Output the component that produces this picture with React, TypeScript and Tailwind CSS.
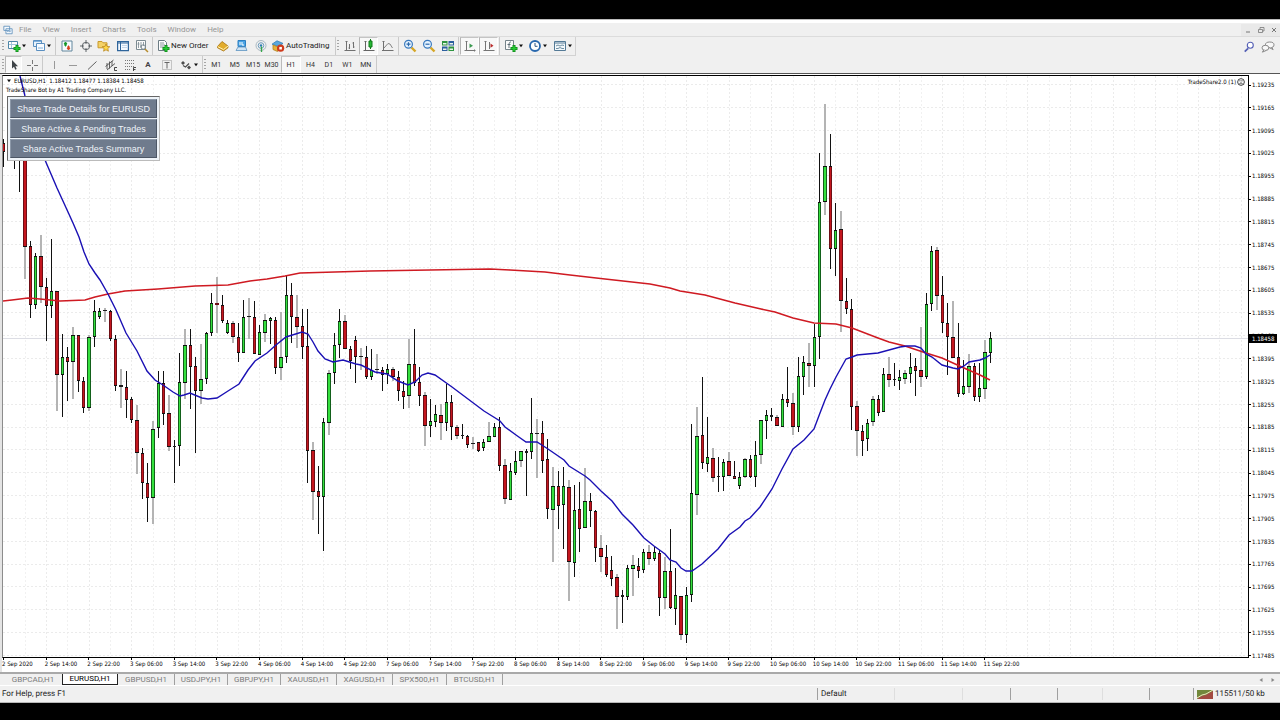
import React from "react";

type Candle = [string, number, number, number, number];

// kind (g = up, r = down, d = doji), high, low, body top, body bottom
const CANDLES: Candle[] = [
  ["r", 139, 167, 143, 152], ["d", 120, 158, 130, 131], ["d", 120, 169, 130, 131], ["d", 120, 192, 130, 131],
  ["r", 120, 279, 140, 247], ["r", 241, 318, 246, 305], ["g", 253, 309, 256, 305], ["r", 235, 303, 256, 287],
  ["r", 278, 341, 287, 306], ["g", 239, 318, 291, 306], ["r", 291, 411, 291, 375], ["g", 334, 417, 357, 375],
  ["r", 347, 401, 357, 362], ["g", 327, 399, 335, 362], ["r", 335, 392, 335, 381], ["r", 377, 413, 381, 408],
  ["g", 335, 411, 337, 408], ["g", 300, 347, 311, 337], ["g", 308, 319, 311, 317], ["d", 308, 322, 310, 311],
  ["r", 310, 341, 311, 339], ["r", 335, 391, 339, 386], ["d", 369, 408, 385, 387], ["r", 371, 418, 387, 400],
  ["r", 397, 423, 399, 420], ["r", 405, 474, 420, 453], ["r", 448, 499, 453, 483], ["r", 463, 522, 483, 498],
  ["g", 421, 524, 429, 498], ["g", 371, 438, 383, 428], ["r", 371, 425, 383, 414], ["r", 395, 451, 413, 447],
  ["d", 440, 483, 446, 447], ["g", 353, 466, 382, 446], ["g", 329, 399, 345, 383], ["r", 329, 409, 345, 367],
  ["r", 357, 453, 366, 391], ["g", 344, 404, 379, 391], ["g", 332, 384, 333, 379], ["g", 293, 336, 303, 333],
  ["r", 277, 333, 303, 305], ["r", 295, 323, 305, 321], ["g", 320, 334, 323, 333], ["r", 321, 343, 323, 337],
  ["r", 323, 362, 337, 353], ["g", 300, 353, 317, 353], ["d", 298, 339, 316, 317], ["r", 301, 354, 317, 354],
  ["g", 325, 355, 332, 355], ["g", 314, 342, 320, 333], ["g", 317, 344, 318, 321], ["r", 317, 374, 320, 368],
  ["g", 312, 380, 357, 368], ["g", 276, 363, 295, 357], ["r", 283, 343, 295, 317], ["r", 295, 348, 317, 327],
  ["r", 309, 359, 326, 347], ["r", 309, 483, 346, 451], ["r", 442, 520, 450, 492], ["r", 466, 534, 491, 497],
  ["g", 418, 551, 422, 497], ["g", 370, 435, 373, 423], ["g", 333, 384, 345, 373], ["g", 309, 358, 321, 345],
  ["r", 315, 349, 321, 349], ["r", 346, 369, 349, 361], ["r", 336, 383, 340, 357], ["d", 348, 370, 356, 357],
  ["r", 346, 379, 357, 377], ["g", 349, 380, 370, 377], ["d", 354, 374, 369, 370], ["r", 367, 391, 370, 375],
  ["g", 364, 384, 369, 374], ["r", 367, 381, 369, 377], ["r", 371, 401, 377, 391], ["r", 381, 409, 391, 397],
  ["g", 339, 408, 364, 396], ["r", 329, 386, 364, 383], ["r", 367, 406, 382, 396], ["r", 392, 446, 395, 426],
  ["g", 399, 437, 421, 426], ["g", 405, 427, 414, 422], ["r", 404, 440, 415, 423], ["g", 384, 431, 402, 423],
  ["r", 395, 440, 402, 427], ["r", 425, 439, 427, 436], ["d", 424, 439, 435, 436], ["r", 435, 448, 436, 445],
  ["d", 437, 449, 443, 444], ["r", 442, 452, 442, 451], ["g", 439, 451, 442, 448], ["g", 422, 442, 436, 442],
  ["g", 423, 437, 427, 437], ["r", 417, 471, 427, 466], ["r", 459, 504, 465, 499], ["g", 463, 500, 471, 500],
  ["g", 451, 475, 461, 473], ["g", 451, 467, 451, 461], ["d", 449, 496, 451, 453], ["g", 398, 459, 433, 452],
  ["d", 419, 478, 433, 434], ["r", 421, 473, 433, 461], ["r", 439, 519, 459, 509], ["g", 467, 562, 486, 510],
  ["r", 471, 529, 486, 506], ["g", 467, 549, 486, 505], ["r", 480, 601, 487, 562], ["g", 485, 577, 510, 563],
  ["r", 482, 552, 509, 529], ["g", 468, 528, 501, 528], ["r", 493, 527, 501, 511], ["r", 510, 562, 511, 548],
  ["r", 535, 572, 548, 557], ["r", 545, 577, 557, 575], ["r", 556, 586, 570, 579], ["r", 574, 629, 577, 597],
  ["d", 590, 623, 595, 597], ["g", 565, 600, 568, 597], ["g", 555, 596, 565, 569], ["r", 558, 578, 566, 571],
  ["g", 549, 573, 552, 570], ["r", 545, 565, 552, 559], ["g", 546, 561, 552, 559], ["r", 550, 616, 553, 598],
  ["g", 557, 609, 571, 598], ["r", 529, 609, 571, 608], ["g", 568, 625, 595, 609], ["r", 596, 640, 596, 635],
  ["g", 587, 643, 595, 635], ["g", 424, 602, 493, 595], ["g", 407, 515, 436, 495], ["r", 377, 469, 435, 463],
  ["g", 417, 472, 457, 464], ["r", 448, 482, 458, 478], ["d", 457, 492, 476, 477], ["g", 459, 491, 462, 477],
  ["r", 452, 476, 461, 476], ["r", 461, 479, 476, 479], ["g", 472, 489, 477, 486], ["g", 458, 478, 459, 477],
  ["r", 455, 478, 459, 477], ["g", 441, 487, 455, 477], ["g", 420, 464, 420, 455], ["g", 410, 439, 415, 421],
  ["d", 408, 421, 415, 417], ["r", 415, 426, 417, 426], ["g", 394, 427, 399, 427], ["r", 367, 407, 399, 403],
  ["r", 393, 435, 403, 427], ["g", 357, 432, 376, 427], ["g", 356, 395, 362, 377], ["r", 343, 387, 363, 366],
  ["g", 324, 387, 337, 366], ["g", 153, 359, 202, 337], ["g", 104, 215, 166, 202], ["r", 134, 269, 166, 249],
  ["g", 203, 276, 230, 249], ["r", 211, 332, 229, 301], ["r", 278, 314, 301, 309], ["r", 299, 430, 309, 407],
  ["r", 401, 456, 406, 431], ["r", 425, 456, 431, 441], ["g", 419, 451, 423, 439], ["g", 396, 426, 399, 422],
  ["r", 395, 416, 399, 413], ["g", 368, 412, 374, 412], ["r", 357, 387, 374, 380], ["d", 363, 386, 379, 380],
  ["g", 370, 390, 377, 381], ["g", 370, 384, 373, 379], ["g", 353, 383, 367, 374], ["r", 358, 396, 366, 371],
  ["r", 327, 387, 370, 377], ["g", 293, 379, 304, 377], ["g", 246, 311, 251, 304], ["r", 247, 310, 250, 296],
  ["r", 276, 333, 295, 323], ["r", 303, 375, 323, 337], ["r", 301, 358, 337, 358], ["r", 323, 397, 357, 394],
  ["g", 360, 395, 386, 394], ["g", 354, 393, 366, 387], ["r", 363, 401, 366, 397], ["g", 363, 402, 388, 397],
  ["g", 340, 399, 352, 389], ["g", 332, 363, 338, 353],
];

const FAST_MA =
  "20,76 25,96 34,126 45,160 57,188 68,212 73,223 79,237 84,252 89,264 95,273 100,280 108,294 116,310 126,333 137,351 147,371 155,380 163,385 173,392 180,396 184,395 190,393 202,398 208,399 217,398 228,391 239,384 248,370 255,361 267,353 276,345 286,337 302,332 308,334 313,342 318,351 325,359 333,362 343,360 356,364 361,365 375,372 387,374 398,381 408,385 415,382 422,375 428,373 435,375 452,387 484,411 500,421 505,427 516,435 526,442 537,442 548,449 564,460 569,466 585,476 590,480 601,491 612,501 622,514 633,525 644,538 654,546 665,554 670,560 676,562 681,568 686,571 692,571 702,564 718,549 729,535 740,527 745,521 750,518 760,507 772,489 782,469 793,449 804,440 814,429 820,413 825,400 830,389 836,377 841,368 846,359 852,357 857,355 878,353 900,347 907,346 915,346 921,348 926,354 932,357 942,365 953,368 958,369 964,366 969,362 980,360 985,358 990,355";
const SLOW_MA =
  "3,301 12,300 28,298 40,299 50,300 60,301 85,300 95,297 108,294 125,291 158,289 195,286 228,285 250,281 267,279 285,276 300,273 335,272 370,271 430,270 490,269 510,270 545,272 570,275 605,279 650,284 670,288 680,291 705,295 735,303 761,309 775,312 793,318 814,323 836,324 852,328 878,338 889,342 905,346 926,353 942,358 964,368 980,375 990,380";

const DATES = [
  "2 Sep 2020", "2 Sep 14:00", "2 Sep 22:00", "3 Sep 06:00", "3 Sep 14:00", "3 Sep 22:00", "4 Sep 06:00", "4 Sep 14:00",
  "4 Sep 22:00", "7 Sep 06:00", "7 Sep 14:00", "7 Sep 22:00", "8 Sep 06:00", "8 Sep 14:00", "8 Sep 22:00", "9 Sep 06:00",
  "9 Sep 14:00", "9 Sep 22:00", "10 Sep 06:00", "10 Sep 14:00", "10 Sep 22:00", "11 Sep 06:00", "11 Sep 14:00", "11 Sep 22:00",
];

const PRICES = Array.from({ length: 26 }, (_, i) => (1.19235 - i * 0.0007).toFixed(5));

function Plot() {
  const columns = Array.from({ length: 58 }, (_, k) => Math.floor(25 + (k * 64) / 3) + 0.5);
  const rows = Array.from({ length: 26 }, (_, k) => Math.floor(84.5 + k * 22.84) + 0.5);
  return (
    <svg viewBox="3 76 1245 581" className="block h-auto w-full" role="img" aria-label="EURUSD hourly candles">
      <g strokeWidth="1" strokeDasharray="2 2" shapeRendering="crispEdges">
        {columns.map((x, k) => (
          <line key={k} x1={x} x2={x} y1="76" y2="657" stroke={k % 2 ? "#ebebeb" : "#f1f1f1"} />
        ))}
        {rows.map((y, k) => (
          <line key={k} x1="3" x2="1248" y1={y} y2={y} stroke="#ebebeb" />
        ))}
      </g>
      <line x1="3" x2="1248" y1="338.5" y2="338.5" stroke="#dcdde4" shapeRendering="crispEdges" />
      <g shapeRendering="crispEdges">
        {CANDLES.map(([kind, high, low, top, bottom], i) => {
          const wide = i % 3 === 1;
          const x = Math.floor((11 + i * 16) / 3 + 0.01);
          const left = wide ? x - 2 : x - 1;
          const width = wide ? 4 : 3;
          const height = bottom - top;
          return (
            <g key={i}>
              <rect x={wide ? x - 1 : x} y={high} width={wide ? 2 : 1} height={low - high} fill={wide ? "#b4b4b4" : "#111"} />
              <rect x={left} y={top} width={width} height={Math.max(1, height)} fill={kind === "r" ? "#6e0e15" : kind === "g" ? "#12601a" : "#1c1c1c"} />
              {kind !== "d" && height > 2 && (
                <rect x={left + 1} y={top + 1} width={width - 2} height={height - 2} fill={kind === "r" ? "#c4161e" : "#35e03e"} />
              )}
              {kind !== "d" && height > 2 && (
                <g fill="#111">
                  <rect x={left} y={top} width={width} height="1" />
                  <rect x={left} y={bottom - 1} width={width} height="1" />
                </g>
              )}
            </g>
          );
        })}
      </g>
      <polyline points={SLOW_MA} fill="none" stroke="#cf1a22" strokeWidth="1.6" />
      <polyline points={FAST_MA} fill="none" stroke="#1a10b4" strokeWidth="1.4" />
    </svg>
  );
}

const Icon = ({ children }: { children: React.ReactNode }) => (
  <svg viewBox="0 0 14 14" className="h-3.5 w-3.5 shrink-0" fill="none" aria-hidden="true">
    {children}
  </svg>
);

const Plus = () => <path d="M6.500 9.500h7M10 6v7" stroke="#0f8a1a" strokeWidth="3" />;
const PlusLight = () => <path d="M7.200 9.500h5.600M10 6.700v5.600" stroke="#27c934" strokeWidth="1.6" />;

const icons = {
  newChart: (
    <Icon>
      <path d="M1.5 2.5h9v7h-9z" fill="#fff" stroke="#4f86a8" />
      <path d="M2 5.5h8M4.5 3v6" stroke="#9fc4d8" />
      <Plus /><PlusLight />
    </Icon>
  ),
  profiles: (
    <Icon>
      <path d="M1.5 1.5h8v6h-8z" fill="#e9f3fb" stroke="#5a8fc0" />
      <path d="M4.5 4.5h8v7h-8z" fill="#f7fbff" stroke="#5a8fc0" />
      <path d="M2 2.5h7M6 9h5" stroke="#7fb0dc" />
    </Icon>
  ),
  market: (
    <Icon>
      <path d="M2 2h10v10H2z" fill="#f6fbff" stroke="#63869c" />
      <path d="M4 5l1.5-2L7 5zM5 5h1v2H5z" fill="#17972a" stroke="#17972a" />
      <path d="M7 9l1.5 2L10 9zM8 7h1v2H8z" fill="#d9401c" stroke="#d9401c" />
    </Icon>
  ),
  target: (
    <Icon>
      <circle cx="7" cy="7" r="3.7" stroke="#5e6468" />
      <path d="M7 1v4M7 9v4M1 7h4M9 7h4" stroke="#5e6468" />
    </Icon>
  ),
  navigator: (
    <Icon>
      <path d="M1 2.5h4l1 1.3h4v5H1z" fill="#f4d267" stroke="#c8992c" />
      <path d="M9 5l1.1 2.5 2.7.2-2 1.8.6 2.7L9 10.8l-2.4 1.4.6-2.7-2-1.8 2.7-.2z" fill="#ffd948" stroke="#b98720" strokeWidth=".8" />
    </Icon>
  ),
  terminal: (
    <Icon>
      <path d="M1.6 2.6h10.8v9H1.6z" fill="#f4f9ff" stroke="#2f659b" strokeWidth="1.2" />
      <path d="M4.5 3v8M2 4h10" stroke="#2f659b" />
      <path d="M6 6.5h5M6 8.5h5" stroke="#b7cde2" strokeWidth=".8" />
    </Icon>
  ),
  tester: (
    <Icon>
      <path d="M1.5 1.5h9v9h-9z" fill="#fafafa" stroke="#7c8b92" />
      <path d="M3.5 3v6M6 3v6M8.5 3v4M2.5 5h2M5 7h2" stroke="#788890" strokeWidth=".8" />
      <circle cx="8.2" cy="8" r="2.2" stroke="#7c8b92" />
      <path d="M10 10l3 3" stroke="#b68b2c" strokeWidth="1.5" />
    </Icon>
  ),
  order: (
    <Icon>
      <path d="M2.5 1.5h6l2 2v8h-8z" fill="#fdfdfd" stroke="#6c7c84" />
      <path d="M4 4h4M4 6h5M4 8h4" stroke="#6c7c84" strokeWidth=".8" />
      <Plus /><PlusLight />
    </Icon>
  ),
  editor: (
    <Icon>
      <path d="M1.5 7.5L6 2.5l6 4.5v1.8L7.5 12l-6-3.2z" fill="#e2ac2c" stroke="#a87412" strokeWidth=".8" />
      <path d="M1.8 7.6L7.5 10.6 12 7" stroke="#fff2b5" />
    </Icon>
  ),
  community: (
    <Icon>
      <path d="M3 1.5h7.5v6H3z" fill="#4aa3e4" stroke="#2b7ec0" />
      <path d="M5 3v3M7 3v3h2" stroke="#fff" />
      <path d="M3 8l-2 3.5h11L10.5 8z" fill="#cfe3f3" stroke="#5c93c0" strokeWidth=".8" />
    </Icon>
  ),
  signals: (
    <Icon>
      <circle cx="7" cy="6.5" r="5" stroke="#a9b8c2" />
      <circle cx="7" cy="6.5" r="2.8" stroke="#6d9bbd" />
      <circle cx="7" cy="6.5" r="1.2" fill="#2d7bb5" />
      <path d="M7.5 7.5V13" stroke="#35a648" strokeWidth="1.3" />
    </Icon>
  ),
  auto: (
    <Icon>
      <path d="M1 5.2L6 1.8l6 2.6-4.5 3z" fill="#58a8de" stroke="#357fb4" strokeWidth=".8" />
      <path d="M2 6v4.5l4.5 2V7.8z" fill="#e6b23c" stroke="#b3831d" strokeWidth=".8" />
      <circle cx="9.6" cy="9.2" r="3.6" fill="#cf3a1b" />
      <path d="M8.3 7.9h2.6v2.6H8.3z" fill="#fff" />
    </Icon>
  ),
  bars: (
    <Icon>
      <path d="M3.5 2v9.500h9M2.500 3l1-1 1 1M1.500 11.5H4" stroke="#707070" />
      <path d="M6.5 5v5M5.500 9h1M10.5 3v6M9.500 4h1M10.5 8H11.500" stroke="#707070" />
    </Icon>
  ),
  candles: (
    <Icon>
      <path d="M3.5 2v9.500h9M2.500 3l1-1 1 1M1.5 11.5H4" stroke="#646464" />
      <path d="M8.5 0v10" stroke="#117a1b" />
      <path d="M7 2h3v6H7z" fill="#26b834" stroke="#117a1b" />
    </Icon>
  ),
  line: (
    <Icon>
      <path d="M2.5 2v9.5h10M1.5 3l1-1 1 1M1 11.5h2" stroke="#707070" />
      <path d="M3 9l4-4.5 2 .5 2.5 4" stroke="#858585" />
    </Icon>
  ),
  zoomIn: (
    <Icon>
      <path d="M8.5 8.5l4 4" stroke="#d6a626" strokeWidth="2.4" />
      <circle cx="5.5" cy="5.2" r="3.9" fill="#e5f3ff" stroke="#3979bd" strokeWidth="1.2" />
      <path d="M3.5 5.2h4M5.5 3.2v4" stroke="#2c69ac" strokeWidth="1.2" />
    </Icon>
  ),
  zoomOut: (
    <Icon>
      <path d="M8.5 8.5l4 4" stroke="#d6a626" strokeWidth="2.4" />
      <circle cx="5.5" cy="5.2" r="3.9" fill="#e5f3ff" stroke="#3979bd" strokeWidth="1.2" />
      <path d="M3.5 5.2h4" stroke="#2c69ac" strokeWidth="1.2" />
    </Icon>
  ),
  tile: (
    <Icon>
      <path d="M1 2h5.5v4.5H1zM7.5 7.5H13V12H7.5z" fill="#2f9440" />
      <path d="M7.5 2H13v4.5H7.5zM1 7.5h5.5V12H1z" fill="#2c5f9e" />
      <path d="M2 4h3.5v1.5H2zM8.5 4H12v1.5H8.5zM2 9.5h3.5V11H2zM8.5 9.5H12V11H8.5z" fill="#e9f5ea" />
    </Icon>
  ),
  scroll: (
    <Icon>
      <path d="M3.5 2v9.500h9M2.500 3l1-1 1 1M1.500 11.5H4M11.500 10.500v2" stroke="#757575" />
      <path d="M6.5 4.500l3.500 2.200-3.500 2.200z" fill="#3b9a50" />
    </Icon>
  ),
  shift: (
    <Icon>
      <path d="M3.5 2v9.500h9M2.500 3l1-1 1 1M1.500 11.5H4M7.5 3v7" stroke="#757575" />
      <path d="M11.500 6.700L8.500 4.600v4.200z" fill="#b92a2a" />
    </Icon>
  ),
  indicators: (
    <Icon>
      <path d="M1.5 1.5h8v9h-8z" fill="#fbfbfb" stroke="#75838a" />
      <path d="M7 3c-2 0-2 1-2 6M3.5 5.5h3" stroke="#5e6f78" />
      <Plus /><PlusLight />
    </Icon>
  ),
  clock: (
    <Icon>
      <circle cx="7" cy="7" r="5" fill="#fff" stroke="#2867ad" strokeWidth="1.8" />
      <path d="M7 4v3.3h2.5" stroke="#2f5580" />
    </Icon>
  ),
  templates: (
    <Icon>
      <path d="M1.5 2.5h11v9h-11z" fill="#f3f8fb" stroke="#547a96" />
      <path d="M2 4h10" stroke="#547a96" />
      <path d="M3 7l2-1 2 1 2-1 2 .5M3 9.5h2l2-1 2 1h2" stroke="#5f8299" strokeWidth=".9" />
    </Icon>
  ),
  cursor: <Icon><path d="M5 2v8.5l2-1.8 1.3 3 1.4-.7-1.3-2.8H11z" fill="#3e4347" /></Icon>,
  cross: <Icon><path d="M7.500 2v4M7.500 9v4M2 7.500h4M9 7.500h4" stroke="#777" /></Icon>,
  vline: <Icon><path d="M7.5 3v8" stroke="#999" /></Icon>,
  hline: <Icon><path d="M3 7.5h8" stroke="#999" /></Icon>,
  trend: <Icon><path d="M3 11.5l8.5-8" stroke="#606060" /></Icon>,
  channel: (
    <Icon>
      <path d="M1.5 8.5l8-6.5M3 12l8-6.5M3 5v6M5.5 3.5v7M8 3v5" stroke="#4e4e4e" strokeWidth=".9" />
      <path d="M13 9.5h-2.5v3H13" stroke="#333" strokeWidth=".9" />
    </Icon>
  ),
  fibo: (
    <Icon>
      <path d="M2 2.5h10M2 5.500h10M2 8.500h10M2 11.500h6" stroke="#777" strokeDasharray="1 1" />
      <path d="M10.500 13V9.500H13M10.500 11.500h2" stroke="#333" strokeWidth=".9" />
    </Icon>
  ),
  label: (
    <Icon>
      <path d="M2.500 2.500h9v9h-9z" stroke="#999" strokeDasharray="1 1" />
      <path d="M4.500 4.500h5M7 5v5.500" stroke="#666" />
    </Icon>
  ),
  arrows: (
    <Icon>
      <path d="M4 3l2 2-2 2-2-2zM10 7.500l2 2-2 2-2-2z" fill="#4c4c4c" />
      <path d="M4 7.500L6.500 9 10 5.500" stroke="#4c4c4c" strokeWidth="1.200" />
    </Icon>
  ),
};

function Tool({ icon, label, pressed, menu, className = "w-[19px]" }: { icon: keyof typeof icons; label: string; pressed?: boolean; menu?: boolean; className?: string }) {
  return (
    <button
      type="button"
      aria-label={label}
      className={`flex h-full shrink-0 items-center justify-center ${className} ${pressed ? "border border-r-[#fff] border-b-[#fff] border-l-[#b5b5b5] border-t-[#c4c4c4] bg-[#f8f8f8]" : ""}`}
    >
      {icons[icon]}
      {menu && <Caret />}
    </button>
  );
}

const Caret = () => (
  <svg viewBox="0 0 6 4" className="h-1 w-1.5 shrink-0" aria-hidden="true"><path d="M1 .5h4L3 3.200z" fill="#111" /></svg>
);
const Sep = () => <span className="mx-[1px] h-full w-px shrink-0 bg-[#cacaca]" />;
const Grip = () => <span className="mr-[1px] h-3 w-[2px] shrink-0 bg-[repeating-linear-gradient(#a5a5a5_0_1px,transparent_1px_3px)]" />;

const TABS = [
  ["GBPCAD,H1", "w-[62px]"], ["EURUSD,H1", "w-[56px]"], ["GBPUSD,H1", "w-[57px]"], ["USDJPY,H1", "w-[53px]"], ["GBPJPY,H1", "w-[53px]"],
  ["XAUUSD,H1", "w-[56px]"], ["XAGUSD,H1", "w-[56px]"], ["SPX500,H1", "w-[54px]"], ["BTCUSD,H1", "w-[56px]"],
];

export default function App() {
  return (
    <div className="flex min-h-screen flex-col bg-black [font-family:Roboto,'Open_Sans',sans-serif] text-[8px] leading-[12px] text-[#222] [text-rendering:geometricPrecision]">
      <header className="mt-[19px] border-t border-[#bcbcbc] bg-[#f0f0f0]">
        <div className="h-[3px] bg-white" />
        <nav className="flex h-[14px] items-center border-b border-[#dcdcdc] text-[#969696]" aria-label="Main menu">
          <svg viewBox="0 0 12 12" className="ml-[3px] h-[10px] w-[10px]" fill="none" aria-hidden="true">
            <path d="M1 1.500h7v5H1zM3.500 4.500H11v6H3.500z" fill="#f7fbff" stroke="#5e8fba" />
            <path d="M5 8.500l1.500-1.500L8 8.500l1.500-2" stroke="#5e8fba" />
          </svg>
          <div className="ml-[6px] flex gap-[11px]">
            {["File", "View", "Insert", "Charts", "Tools", "Window", "Help"].map((m) => (
              <button type="button" key={m}>{m}</button>
            ))}
          </div>
          <div className="ml-auto flex text-[#777]">
            <button type="button" aria-label="Minimize" className="flex h-3 w-[13px] items-center justify-center bg-[#e9e9e9]">
              <svg viewBox="0 0 8 8" className="h-2 w-2"><path d="M2 6h4" stroke="currentColor" /></svg>
            </button>
            <button type="button" aria-label="Restore" className="flex h-3 w-[13px] items-center justify-center bg-[#e9e9e9]">
              <svg viewBox="0 0 8 8" className="h-2 w-2" fill="none"><path d="M1.500 3.500h4v3h-4zM3 3V1.500h4v3.500H6" stroke="currentColor" strokeWidth=".8" /></svg>
            </button>
            <button type="button" aria-label="Close" className="flex h-3 w-[13px] items-center justify-center bg-[#e9e9e9]">
              <svg viewBox="0 0 8 8" className="h-2 w-2"><path d="M2 2l4 4M6 2L2 6" stroke="currentColor" /></svg>
            </button>
          </div>
        </nav>

        <div className="flex items-center">
          <div className="flex h-[19px] items-center border-r border-b border-[#d2d2d2] pl-[2px]">
            <Grip />
            <Tool icon="newChart" label="New chart" menu className="w-6" />
            <Tool icon="profiles" label="Profiles" menu className="w-[25px]" />
            <Sep />
            <Tool icon="market" label="Market Watch" />
            <Tool icon="target" label="Data Window" />
            <Tool icon="navigator" label="Navigator" className="w-[18px]" />
            <Tool icon="terminal" label="Terminal" />
            <Tool icon="tester" label="Strategy Tester" />
            <Sep />
            <button type="button" className="flex h-full w-[59px] shrink-0 items-center gap-[1px] whitespace-nowrap pl-[2px]">{icons.order}New Order</button>
            <Tool icon="editor" label="MetaEditor" />
            <Tool icon="community" label="Community" />
            <Tool icon="signals" label="Signals" />
            <button type="button" className="flex h-full w-16 shrink-0 items-center gap-[1px] whitespace-nowrap pl-[1px]">{icons.auto}AutoTrading</button>
            <Sep />
            <Grip />
            <Tool icon="bars" label="Bar chart" />
            <Tool icon="candles" label="Candlesticks" pressed />
            <Tool icon="line" label="Line chart" />
            <Sep />
            <Tool icon="zoomIn" label="Zoom in" />
            <Tool icon="zoomOut" label="Zoom out" />
            <Tool icon="tile" label="Tile windows" />
            <Sep />
            <Tool icon="scroll" label="Auto scroll" pressed />
            <Tool icon="shift" label="Chart shift" pressed />
            <Sep />
            <Tool icon="indicators" label="Indicators" menu className="w-[25px]" />
            <Tool icon="clock" label="Periods" menu className="w-6" />
            <Tool icon="templates" label="Templates" menu className="w-[25px]" />
          </div>
          <div className="ml-auto flex gap-1.5 pr-[5px]">
            <button type="button" aria-label="Search">
              <svg viewBox="0 0 14 14" className="h-3 w-3" fill="none"><path d="M6 8.500l-4 4" stroke="#5560b5" strokeWidth="2" /><circle cx="8.500" cy="5" r="3.500" fill="#fff" stroke="#5560b5" strokeWidth="1.300" /></svg>
            </button>
            <button type="button" aria-label="Chat">
              <svg viewBox="0 0 16 14" className="h-3 w-3.5" fill="#f8f8f8" stroke="#777"><ellipse cx="10" cy="4.500" rx="5" ry="3.300" /><path d="M12 7l2 3-4-2" /><ellipse cx="5" cy="8" rx="4" ry="3" /><path d="M3 10.500L1.500 13 6 11" /></svg>
            </button>
          </div>
        </div>

        <div className="flex h-[18px] items-center border-b border-[#555] pl-[2px]">
          <Grip />
          <Tool icon="cursor" label="Cursor" pressed className="w-[17px]" />
          <Tool icon="cross" label="Crosshair" />
          <Sep />
          <Tool icon="vline" label="Vertical line" />
          <Tool icon="hline" label="Horizontal line" />
          <Tool icon="trend" label="Trendline" />
          <Tool icon="channel" label="Equidistant channel" />
          <Tool icon="fibo" label="Fibonacci retracement" />
          <button type="button" aria-label="Text" className="w-[18px] shrink-0 font-bold text-[#444]">A</button>
          <Tool icon="label" label="Text label" />
          <Tool icon="arrows" label="Arrows" menu className="w-[25px]" />
          <Sep />
          <Grip />
          <div className="flex h-full w-[168px] shrink-0 text-[7px] text-[#333]">
            {["M1", "M5", "M15", "M30", "H1", "H4", "D1", "W1", "MN"].map((p) => (
              <button type="button" key={p} className={`flex-1 text-center ${p === "H1" ? "border border-b-white border-l-[#bbb] border-r-white border-t-[#c8c8c8] bg-[#f8f8f8]" : ""}`}>{p}</button>
            ))}
          </div>
          <Sep />
        </div>
      </header>

      <main className="flex border-l-2 border-[#e4e4e4] bg-white pt-px [font-family:'DejaVu_Sans_Condensed','DejaVu_Sans',sans-serif] text-[6px] leading-[6px] text-black [text-rendering:auto]">
        <div className="min-w-0 flex-1">
          <div className="relative border-r border-b border-t border-l border-black border-l-[#8c8c8c]">
            <Plot />
            <div className="absolute left-[3px] top-[2px] flex flex-col gap-[3px] whitespace-nowrap">
              <div className="flex items-center gap-[2px]"><Caret />EURUSD,H1&nbsp; 1.18412 1.18477 1.18384 1.18458</div>
              <div>TradeShare Bot by A1 Trading Company LLC.</div>
            </div>
            <div className="absolute right-[3px] top-[2px] flex items-center gap-[1px]">
              TradeShare2.0 (1)
              <svg viewBox="0 0 10 10" className="h-2 w-2" fill="none" stroke="#111"><circle cx="5" cy="5" r="4.200" /><path d="M3 7.200q2-2.400 4 0M3 3.500h1.400M5.600 3.500H7" /></svg>
            </div>
            <div className="absolute left-1 top-5 flex w-[153px] flex-col gap-px border border-t-[#666] border-l-[#666] border-b-[#bbb] border-r-[#bbb] bg-[#eef3f8] p-[2px] [font-family:'Liberation_Sans',sans-serif] text-[9px] leading-[17px]">
              {["Share Trade Details for EURUSD", "Share Active & Pending Trades", "Share Active Trades Summary"].map((t) => (
                <button type="button" key={t} className="h-[19px] border border-[#8d99a9] border-b-[#4d5766] border-r-[#4d5766] bg-[#6f7b8d] pt-px text-[#f0f4fa]">{t}</button>
              ))}
            </div>
          </div>
          <div className="flex h-[14px] w-[1024px]">
            {DATES.map((d) => (
              <div key={d} className="min-w-0 flex-1 whitespace-nowrap">
                <div className="ml-px h-[2px] w-px bg-black" />
                <div className="mt-px">{d}</div>
              </div>
            ))}
          </div>
        </div>
        <div className="relative flex w-[31px] shrink-0 flex-col justify-between pb-[13px] pt-[7px]">
          {PRICES.map((p) => (
            <div key={p} className="flex items-center gap-[1px]"><span className="h-px w-[2px] bg-black" />{p}</div>
          ))}
          <div className="absolute left-0 right-[3px] top-[43.4%] flex h-[9px] items-center bg-black pl-[3px] text-white">1.18458</div>
        </div>
      </main>

      <footer className="bg-[#f0f0f0]">
        <div className="flex h-[13px] items-stretch border-t-2 border-[#a9a9a9] text-[#7b7b7b]">
          {TABS.map(([name, width]) => (
            <button
              type="button"
              key={name}
              className={`${width} shrink-0 pb-px leading-[9px] ${name === "EURUSD,H1" ? "border-b border-l border-r border-[#222] bg-white text-black" : name === "GBPCAD,H1" ? "pl-1" : "border-r border-[#a0a0a0]"}`}
            >
              {name}
            </button>
          ))}
          <div className="ml-auto flex items-center gap-1.5 pr-1">
            <button type="button" aria-label="Previous tabs"><svg viewBox="0 0 6 6" className="h-1.5 w-1.5"><path d="M4.500 1v4L1.500 3z" fill="#888" /></svg></button>
            <button type="button" aria-label="Next tabs"><svg viewBox="0 0 6 6" className="h-1.5 w-1.5"><path d="M1.500 1v4l3-2z" fill="#888" /></svg></button>
          </div>
        </div>
        <div className="flex h-[18px] items-center border-b border-t border-b-[#b8b8b8] border-t-white">
          <div className="flex-1 pl-[2px]">For Help, press F1</div>
          <div className="w-[77px] border-l border-[#a0a0a0] pl-[3px]">Default</div>
          <div className="h-3 w-[68px] border-l border-[#dedede]" />
          <div className="h-3 w-12 border-l border-[#dedede]" />
          <div className="h-3 w-[47px] border-l border-[#a0a0a0]" />
          <div className="h-3 w-[45px] border-l border-[#a0a0a0]" />
          <div className="h-3 w-[47px] border-l border-[#dedede]" />
          <div className="h-3 w-[44px] border-l border-[#a0a0a0]" />
          <div className="flex w-[87px] items-center gap-[2px] border-l border-[#a0a0a0] pl-[3px]">
            <svg viewBox="0 0 16 9" className="h-[9px] w-4" aria-hidden="true"><path d="M0 0h16v9H0z" fill="#71883b" /><path d="M0 9l5-3 4-1 7-4v8z" fill="#a34b42" /><path d="M0 8l5-3 4-1 7-4" fill="none" stroke="#f0e8c0" /></svg>
            115511/50 kb
          </div>
        </div>
      </footer>
    </div>
  );
}
